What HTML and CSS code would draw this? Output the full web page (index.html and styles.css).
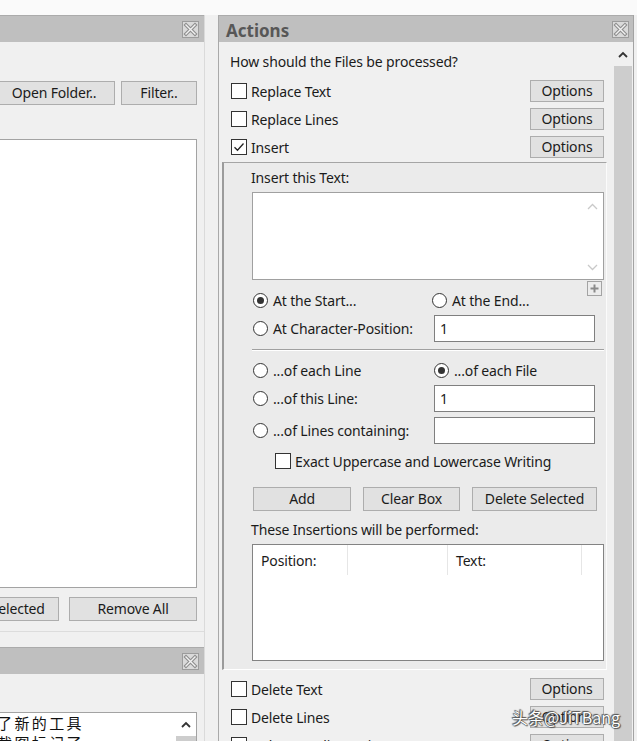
FILE: index.html
```html
<!DOCTYPE html>
<html>
<head>
<meta charset="utf-8">
<link rel="stylesheet" href="styles.css">
</head>
<body>
<div class="screen">
  <div class="main">
    <div class="leftcol">
      <section class="panel lp1">
        <header class="titlebar">
          <span class="closebtn"><svg width="17" height="17" viewBox="0 0 17 17"><rect x="0.5" y="0.5" width="16" height="16" fill="#dadada" stroke="#9c9c9c"/><path d="M4 4L13 13M13 4L4 13" stroke="#8e8e8e" stroke-width="3.6" stroke-linecap="square"/><path d="M4 4L13 13M13 4L4 13" stroke="#f2f2f2" stroke-width="1.4" stroke-linecap="square"/></svg></span>
        </header>
        <div class="lbody">
          <div class="lrow">
            <button class="btn w-open">Open Folder..</button>
            <button class="btn w-filter">Filter..</button>
          </div>
          <div class="filelist"></div>
          <div class="lrow lrow2">
            <button class="btn w-remsel">Remove Selected</button>
            <button class="btn w-remall">Remove All</button>
          </div>
        </div>
      </section>
      <section class="panel lp2">
        <header class="titlebar">
          <span class="closebtn"><svg width="17" height="17" viewBox="0 0 17 17"><rect x="0.5" y="0.5" width="16" height="16" fill="#dadada" stroke="#9c9c9c"/><path d="M4 4L13 13M13 4L4 13" stroke="#8e8e8e" stroke-width="3.6" stroke-linecap="square"/><path d="M4 4L13 13M13 4L4 13" stroke="#f2f2f2" stroke-width="1.4" stroke-linecap="square"/></svg></span>
        </header>
        <div class="lbody2">
          <div class="notebox">
            <div class="notetext">
              <div class="noteline">了新的工具</div>
              <div class="noteline">截图标记了</div>
            </div>
            <div class="minibar">
              <div class="minibar-up"><svg width="10" height="7" viewBox="0 0 10 7"><path d="M1 6L5 2L9 6" fill="none" stroke="#333" stroke-width="1.8"/></svg></div>
              <div class="minibar-thumb"></div>
            </div>
          </div>
        </div>
      </section>
    </div>

    <section class="panel rp">
      <header class="titlebar rtitle">
        <span class="ttl">Actions</span>
        <span class="closebtn"><svg width="17" height="17" viewBox="0 0 17 17"><rect x="0.5" y="0.5" width="16" height="16" fill="#dadada" stroke="#9c9c9c"/><path d="M4 4L13 13M13 4L4 13" stroke="#8e8e8e" stroke-width="3.6" stroke-linecap="square"/><path d="M4 4L13 13M13 4L4 13" stroke="#f2f2f2" stroke-width="1.4" stroke-linecap="square"/></svg></span>
      </header>
      <div class="rbody">
        <div class="content">
          <div class="question">How should the Files be processed?</div>
          <div class="crow first">
            <label class="chk"><span class="box"></span><span>Replace Text</span></label>
            <button class="btn w-opt">Options</button>
          </div>
          <div class="crow">
            <label class="chk"><span class="box"></span><span>Replace Lines</span></label>
            <button class="btn w-opt">Options</button>
          </div>
          <div class="crow">
            <label class="chk"><span class="box checked"><svg width="14" height="14" viewBox="0 0 14 14"><path d="M2.5 7.2L5.5 10.2L11.5 3.5" fill="none" stroke="#222" stroke-width="1.3"/></svg></span><span>Insert</span></label>
            <button class="btn w-opt">Options</button>
          </div>

          <div class="subpanel">
            <div class="sublabel">Insert this Text:</div>
            <div class="textarea">
              <div class="ta-bar">
                <svg width="11" height="7" viewBox="0 0 11 7"><path d="M1 6L5.5 1.5L10 6" fill="none" stroke="#c9c9c9" stroke-width="1.3"/></svg>
                <svg width="11" height="7" viewBox="0 0 11 7"><path d="M1 1L5.5 5.5L10 1" fill="none" stroke="#c9c9c9" stroke-width="1.3"/></svg>
              </div>
              <span class="plusbtn"><svg width="15" height="15" viewBox="0 0 15 15"><rect x="0.5" y="0.5" width="14" height="14" fill="#ececec" stroke="#a3a3a3"/><path d="M7.5 3.5V11.5M3.5 7.5H11.5" stroke="#8a8a8a" stroke-width="2"/></svg></span>
            </div>

            <div class="grid g1">
              <label class="rad"><span class="circ on"></span><span>At the Start...</span></label>
              <label class="rad shift"><span class="circ"></span><span>At the End...</span></label>
            </div>
            <div class="grid g2">
              <label class="rad"><span class="circ"></span><span>At Character-Position:</span></label>
              <div class="input">1</div>
            </div>

            <div class="sep"></div>

            <div class="grid g3">
              <label class="rad"><span class="circ"></span><span>...of each Line</span></label>
              <label class="rad"><span class="circ on"></span><span>...of each File</span></label>
            </div>
            <div class="grid g4">
              <label class="rad"><span class="circ"></span><span>...of this Line:</span></label>
              <div class="input">1</div>
            </div>
            <div class="grid g4">
              <label class="rad"><span class="circ"></span><span>...of Lines containing:</span></label>
              <div class="input"></div>
            </div>
            <div class="exact">
              <label class="chk"><span class="box"></span><span>Exact Uppercase and Lowercase Writing</span></label>
            </div>
            <div class="btnrow">
              <button class="btn w-add">Add</button>
              <button class="btn w-clear">Clear Box</button>
              <button class="btn w-del">Delete Selected</button>
            </div>
            <div class="sublabel lbl2">These Insertions will be performed:</div>
            <div class="listview">
              <div class="lvhead">
                <div class="col c1">Position:</div>
                <div class="col c2"></div>
                <div class="col c3">Text:</div>
                <div class="col c4"></div>
              </div>
            </div>
          </div>

          <div class="crow after">
            <label class="chk"><span class="box"></span><span>Delete Text</span></label>
            <button class="btn w-opt">Options</button>
          </div>
          <div class="crow">
            <label class="chk"><span class="box"></span><span>Delete Lines</span></label>
            <button class="btn w-opt">Options</button>
          </div>
          <div class="crow">
            <label class="chk"><span class="box"></span><span>Delete Duplicate Lines</span></label>
            <button class="btn w-opt">Options</button>
          </div>
        </div>
        <div class="vscroll">
          <div class="vs-up"><svg width="10" height="7" viewBox="0 0 10 7"><path d="M1 6L5 2L9 6" fill="none" stroke="#333" stroke-width="1.8"/></svg></div>
          <div class="vs-thumb"></div>
        </div>
      </div>
    </section>
  </div>
  <div class="watermark">头条@JiTBang</div>
</div>
</body>
</html>
```

FILE: styles.css
```css
* { box-sizing: border-box; }
html, body { margin: 0; padding: 0; }
body {
  width: 637px; height: 741px; overflow: hidden;
  background: #fafafa;
  font-family: "Noto Sans", "Noto Sans CJK SC", sans-serif;
  font-size: 14px; color: #1b1b1b; letter-spacing: -0.15px;
}
.screen { position: relative; width: 637px; height: 741px; overflow: hidden; padding-top: 15px; }
.main { display: flex; height: 726px; background: #f0f0f0; }

button { font-family: inherit; font-size: 14px; color: #1b1b1b; letter-spacing: -0.15px; }
.btn {
  background: #e1e1e1; border: 1px solid #adadad; padding: 0; margin: 0;
  height: 24px; flex: none; white-space: nowrap; line-height: 20px;
}

.panel { background: #f0f0f0; display: flex; flex-direction: column; }
.titlebar {
  height: 27px; flex: none; background: #bfbfbf; border-top: 1px solid #ababab;
  display: flex; align-items: center; justify-content: flex-end; padding-right: 5px;
}
.closebtn { display: block; width: 17px; height: 17px; }
.closebtn svg { display: block; }

/* left column */
.leftcol {
  width: 205px; flex: none; display: flex; flex-direction: column; gap: 15px;
  overflow: hidden; border-right: 1px solid #dadada;
}
.lp1 { height: 617px; flex: none; border-bottom: 1px solid #dcdcdc; }
.lbody { padding: 39px 7px 0 0; display: flex; flex-direction: column; }
.lrow { display: flex; justify-content: flex-end; gap: 6px; height: 24px; }
.lrow2 { margin-top: 9px; gap: 10px; }
.w-open { width: 122px; }
.w-filter { width: 76px; }
.w-remsel { width: 138px; }
.w-remall { width: 128px; }
.filelist {
  margin-top: 34px; height: 449px; margin-left: -2px;
  background: #fff; border: 1px solid #a3a3a3;
}
.lp2 { flex: 1; }
.lbody2 { padding: 38px 7px 0 0; flex: 1; display: flex; flex-direction: column; }
.notebox {
  flex: 1; margin-left: -2px; background: #fff; border: 1px solid #a3a3a3; border-bottom: none;
  display: flex;
}
.notetext { flex: 1; padding-top: 0; overflow: hidden; }
.noteline {
  font-family: "Noto Sans CJK SC", sans-serif; font-size: 15px; line-height: 20px;
  letter-spacing: 2.4px; margin-left: -2px; white-space: nowrap; color: #111;
}
.minibar { width: 20px; display: flex; flex-direction: column; }
.minibar-up { height: 23px; display: flex; align-items: center; justify-content: center; }
.minibar-thumb { flex: 1; background: #cdcdcd; }

/* right panel */
.rp {
  width: 416px; flex: none; margin-left: 13px;
  border-left: 1px solid #a9a9a9; border-right: 1px solid #a3a3a3;
}
.rtitle { justify-content: space-between; padding-left: 7px; padding-right: 4px; }
.ttl { font-weight: bold; font-size: 17px; color: #575757; line-height: 20px; padding-top: 3px; letter-spacing: 0; }
.rbody { flex: 1; display: flex; overflow: hidden; }
.content { width: 394px; flex: none; display: flex; flex-direction: column; }
.vscroll { width: 20px; flex: none; display: flex; flex-direction: column; }
.vs-up { height: 24px; display: flex; align-items: center; justify-content: center; background: #f0f0f0; }
.vs-thumb { flex: 1; background: #cdcdcd; margin: 0 1px; }

.question { padding-top: 10px; margin-left: 11px; line-height: 20px; height: 30px; }
.crow {
  display: flex; align-items: center; justify-content: space-between;
  height: 22px; flex: none; margin: 6px 9px 0 12px;
}
.crow.first { margin-top: 8px; }
.crow.after { margin-top: 8px; }
.w-opt { width: 74px; height: 22px; }

.chk { display: flex; align-items: center; gap: 4px; white-space: nowrap; }
.box {
  width: 16px; height: 16px; background: #fff; border: 1px solid #333; flex: none;
  display: flex; align-items: center; justify-content: center;
}
.box svg { display: block; }

.rad { display: flex; align-items: center; gap: 5px; white-space: nowrap; }
.circ {
  width: 15px; height: 15px; border-radius: 50%; border: 1px solid #333; background: #fff;
  flex: none; display: flex; align-items: center; justify-content: center;
}
.circ.on::after { content: ""; width: 7px; height: 7px; border-radius: 50%; background: #333; }

.subpanel {
  margin: 4px 6px 0 3px; flex: none;
  background: #ebebeb;
  border-left: 2px solid #9b9b9b; border-top: 1px solid #a5a5a5;
  border-right: 1px solid #fbfbfb; border-bottom: 1px solid #fff;
  padding: 5px 2px 8px 0;
  display: flex; flex-direction: column;
}
.sublabel { margin-left: 27px; line-height: 20px; height: 20px; }
.textarea {
  position: relative; margin: 4px 0 0 28px; height: 88px;
  background: #fff; border: 1px solid #a0a0a0;
  display: flex; justify-content: flex-end;
}
.ta-bar { width: 22px; display: flex; flex-direction: column; justify-content: space-between; align-items: center; padding: 10px 0 8px; }
.ta-bar svg { display: block; }
.plusbtn { position: absolute; right: 1px; top: calc(100% + 2px); width: 15px; height: 15px; }
.plusbtn svg { display: block; }

.grid {
  display: grid; grid-template-columns: 181px 161px; align-items: center;
  margin-left: 29px;
}
.g1 { margin-top: 10px; height: 20px; }
.g2 { margin-top: 5px; height: 27px; }
.g3 { margin-top: 9px; height: 20px; }
.g4 { margin-top: 5px; height: 27px; }
.shift { margin-left: -2px; }
.input {
  height: 27px; background: #fff; border: 1px solid #7f7f7f; padding-left: 5px; line-height: 25px;
}
.sep { margin: 7px 0 0 28px; border-top: 1px solid #a0a0a0; border-bottom: 1px solid #fff; height: 2px; }
.exact { margin: 8px 0 0 51px; height: 18px; display: flex; align-items: center; }
.btnrow { display: flex; gap: 12px; margin: 17px 0 0 29px; height: 24px; }
.w-add { width: 98px; }
.w-clear { width: 97px; }
.w-del { width: 125px; }
.lbl2 { margin-top: 9px; }
.listview {
  margin: 4px 0 0 28px; height: 117px; background: #fff; border: 1px solid #838383;
}
.lvhead { display: flex; height: 32px; }
.col { height: 30px; line-height: 32px; padding-left: 8px; border-right: 1px solid #e6e6e6; }
.c1 { width: 95px; }
.c2 { width: 100px; }
.c3 { width: 134px; }
.c4 { width: 0; border-right: none; }

.watermark {
  position: absolute; left: 512px; top: 705px;
  font-family: "Noto Sans CJK SC", sans-serif; font-size: 16px; color: #fff; letter-spacing: 0;
  text-shadow: 0 0 1px #444, 0 0 1px #444, 1px 1px 1px #555, -1px -1px 1px #555;
  white-space: nowrap;
}
```
